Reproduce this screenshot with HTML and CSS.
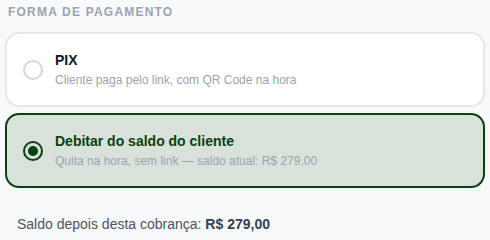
FILE: index.html
```html
<!DOCTYPE html>
<html lang="pt-BR">
<head>
<meta charset="utf-8">
<title>Forma de pagamento</title>
<link rel="stylesheet" href="styles.css">
</head>
<body>
<div class="page">
  <div class="section-title">FORMA DE PAGAMENTO</div>
  <div class="options">
    <div class="option">
      <span class="radio"></span>
      <div class="option-text">
        <div class="option-title">PIX</div>
        <div class="option-sub">Cliente paga pelo link, com QR Code na hora</div>
      </div>
    </div>
    <div class="option option-selected">
      <span class="radio radio-checked"></span>
      <div class="option-text">
        <div class="option-title">Debitar do saldo do cliente</div>
        <div class="option-sub">Quita na hora, sem link — saldo atual: R$ 279,00</div>
      </div>
    </div>
  </div>
  <div class="balance">Saldo depois desta cobrança: <strong>R$ 279,00</strong></div>
</div>
</body>
</html>
```
FILE: styles.css
```css
html, body {
  margin: 0;
  padding: 0;
  background: #f8f9fb;
  font-family: "Liberation Sans", Arial, sans-serif;
}

.page {
  padding: 5px 5px 0 5px;
  display: flex;
  flex-direction: column;
}

.section-title {
  font-size: 12px;
  font-weight: 700;
  letter-spacing: 1.2px;
  color: #9ca3af;
  padding-left: 3px;
  margin-bottom: 13px;
}

.options {
  display: flex;
  flex-direction: column;
  gap: 6px;
}

.option {
  display: flex;
  align-items: center;
  gap: 12px;
  padding: 18px 16px;
  background: #ffffff;
  border: 2px solid #e5e7eb;
  border-radius: 14px;
}

.option-selected {
  background: #d8e2da;
  border-color: #0b3f0e;
}

.radio {
  box-sizing: border-box;
  width: 20px;
  height: 20px;
  border-radius: 50%;
  border: 2px solid #d1d5db;
  background: #ffffff;
  flex-shrink: 0;
  display: flex;
  align-items: center;
  justify-content: center;
}

.radio-checked {
  border: 2.5px solid #0b3f0e;
  background: transparent;
}

.radio-checked::after {
  content: "";
  width: 10px;
  height: 10px;
  border-radius: 50%;
  background: #0b3f0e;
}

.option-text {
  display: flex;
  flex-direction: column;
  gap: 5px;
}

.option-title {
  font-size: 14px;
  font-weight: 700;
  color: #111827;
}

.option-selected .option-title {
  color: #0b3f0e;
}

.option-sub {
  font-size: 12px;
  color: #9ca3af;
}

.balance {
  margin-top: 28px;
  padding-left: 12px;
  font-size: 14px;
  color: #4b5563;
}

.balance strong {
  color: #374151;
}
```
